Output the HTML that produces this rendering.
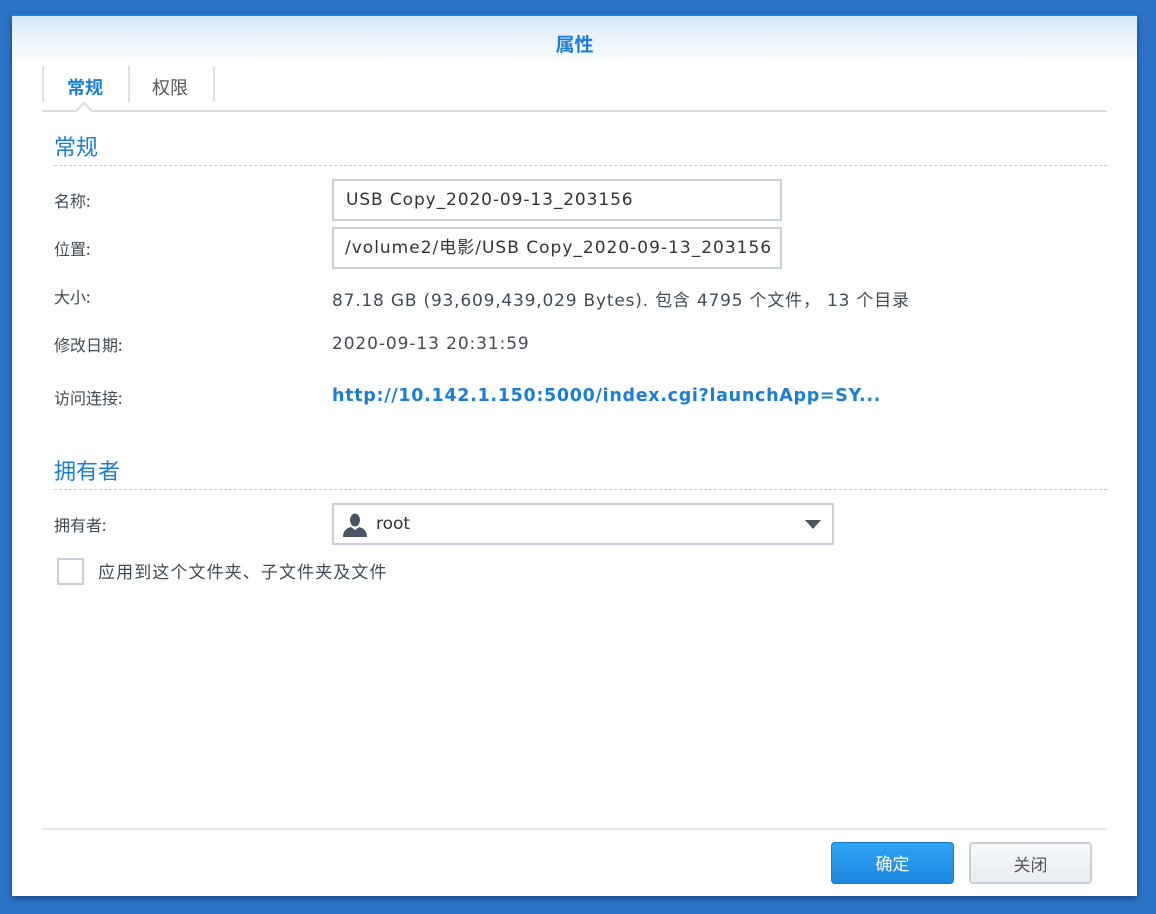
<!DOCTYPE html>
<html><head><meta charset="utf-8"><style>
*{margin:0;padding:0;box-sizing:border-box}
body{width:1156px;height:914px;background:#2d73c8;position:relative;overflow:hidden;font-family:"DejaVu Sans","Noto Sans CJK SC",sans-serif;color:#414b55;font-size:16px}
.dlg{position:absolute;left:12px;top:14px;width:1125px;height:882px;background:#fff;border-top:2px solid #1e88dd;box-shadow:0 2px 6px rgba(0,0,0,.4)}
.hdr{position:absolute;left:0;top:0;width:100%;height:50px;background:linear-gradient(#d8e9f8,#fff);}
.title{position:absolute;top:14px;width:100%;text-align:center;font-weight:bold;color:#1a7ed6;font-size:19px}
.abs{position:absolute;white-space:nowrap}
.tabs{position:absolute;left:30px;top:50px;width:1065px;height:46px;border-bottom:2px solid #d8dadc}
.tab{position:absolute;top:0;height:36px;border-left:2px solid #dfe1e3;}
.sec{color:#1a7ed6;font-size:22px}
.dash{position:absolute;left:54px;width:1053px;border-top:1.5px dashed #c9cdd1}
.lbl{position:absolute;left:54px;font-family:"Noto Sans CJK SC",sans-serif;font-size:16px}
.inp{position:absolute;border:2px solid #c8d1da;background:#fff;padding-left:12px;line-height:39px;font-size:17px;color:#333;white-space:nowrap;overflow:hidden}
.btn{position:absolute;width:123px;height:42px;border-radius:4px;text-align:center;line-height:40px;font-size:17px;font-family:"Noto Sans CJK SC",sans-serif}
</style></head><body>
<div class="dlg">
<div class="hdr"></div>
<div class="title">属性</div>
<div class="tabs">
<div class="tab" style="left:0;width:86px"></div>
<div class="tab" style="left:86px;width:86px"></div>
<div class="tab" style="left:171px"></div>
<div class="abs" style="left:25px;top:8px;font-weight:bold;color:#1a7ed6;font-size:18px">常规</div>
<div class="abs" style="left:110px;top:8px;font-size:18px;color:#555">权限</div>
<div class="abs" style="left:36px;top:38px;width:12px;height:12px;background:#fff;border-left:2px solid #d8dadc;border-top:2px solid #d8dadc;transform:rotate(45deg)"></div>
</div>
</div>
<div class="abs sec" style="left:54px;top:130px">常规</div>
<div class="dash" style="top:165px"></div>
<div class="lbl" style="top:188px">名称:</div>
<div class="inp" style="left:332px;top:179px;width:450px;height:42px;letter-spacing:0.9px">USB Copy_2020-09-13_203156</div>
<div class="lbl" style="top:236px">位置:</div>
<div class="inp" style="left:332px;top:227px;width:450px;height:42px;padding-left:11px;letter-spacing:1.0px">/volume2/电影/USB Copy_2020-09-13_203156</div>
<div class="lbl" style="top:284px">大小:</div>
<div class="abs" style="left:332px;top:286px;font-size:17px;letter-spacing:0.8px">87.18 GB (93,609,439,029 Bytes). 包含 4795 个文件， 13 个目录</div>
<div class="lbl" style="top:332px">修改日期:</div>
<div class="abs" style="left:332px;top:334px;font-size:17px;letter-spacing:0.9px">2020-09-13 20:31:59</div>
<div class="lbl" style="top:385px">访问连接:</div>
<div class="abs" style="left:332px;top:386px;font-size:17.5px;font-weight:bold;color:#1a7ed6;letter-spacing:0.7px">http://10.142.1.150:5000/index.cgi?launchApp=SY...</div>
<div class="abs sec" style="left:54px;top:454px">拥有者</div>
<div class="dash" style="top:489px"></div>
<div class="lbl" style="top:512px">拥有者:</div>
<div class="inp" style="left:332px;top:503px;width:502px;height:42px;padding-left:42px">root</div>
<svg class="abs" style="left:342px;top:512px" width="26" height="26" viewBox="0 0 26 26"><ellipse cx="13" cy="8" rx="5" ry="6.5" fill="#4a5561"/><path d="M1 25 Q1 17 9 15 L13 18 L17 15 Q25 17 25 25Z" fill="#4a5561"/></svg>
<svg class="abs" style="left:805px;top:520px" width="16" height="10"><path d="M0 0H16L8 9Z" fill="#4a5561"/></svg>
<div class="abs" style="left:57px;top:558px;width:27px;height:27px;border:2px solid #c8d1da;background:#fff"></div>
<div class="abs" style="left:98px;top:558px;font-size:17px;letter-spacing:1.1px;font-family:'Noto Sans CJK SC',sans-serif">应用到这个文件夹、子文件夹及文件</div>
<div class="abs" style="left:42px;top:828px;width:1065px;border-top:2px solid #e6e8ea"></div>
<div class="btn" style="left:831px;top:842px;background:linear-gradient(#2ea3f6,#1d88e0);border:1px solid #1878c8;color:#fff">确定</div>
<div class="btn" style="left:969px;top:842px;background:linear-gradient(#f7f9fb,#e8edf2);border:2px solid #c8cfd6;color:#555">关闭</div>
</body></html>
